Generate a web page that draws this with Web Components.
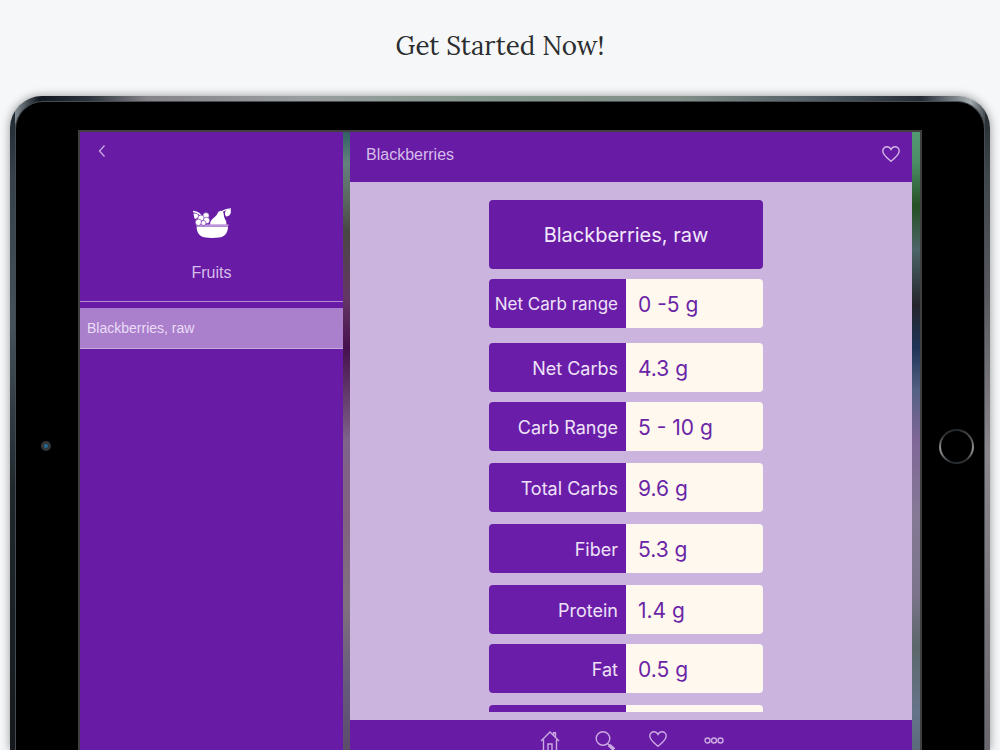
<!DOCTYPE html>
<html lang="en">
<head>
<meta charset="utf-8">
<title>Get Started Now!</title>
<style>
html, body { margin: 0; height: 100%; }
body { background: #f6f7f9; overflow: hidden; font-family: Inter, "Liberation Sans", sans-serif; }
</style>
</head>
<body>
<landing-page>
  <tablet-device>
    <food-sidebar slot="side" category="Fruits">Blackberries, raw</food-sidebar>
    <food-detail slot="main" heading="Blackberries">
      <nutrition-card name="Blackberries, raw"></nutrition-card>
      <tab-bar slot="tabs"></tab-bar>
    </food-detail>
  </tablet-device>
</landing-page>
<script>
function define(name, render) {
  customElements.define(name, class extends HTMLElement {
    connectedCallback() {
      if (this.shadowRoot) return;
      this.attachShadow({ mode: 'open' }).innerHTML = render(this);
    }
  });
}

const heart = '<path d="M9 15.300C6.200 12.800 .8 9 .8 5C.8 2.500 2.700 .8 4.900 .8C6.900 .8 8.200 2 9 3.500C9.800 2 11.100 .8 13.100 .8C15.300 .8 17.200 2.500 17.200 5C17.200 9 11.800 12.800 9 15.300Z"/>';

define('landing-page', () => `
<style>
:host { display: flex; flex-direction: column; height: 100vh; }
h1 { margin: 0; padding: 28px 0 32px; text-align: center; color: #2b2d2f;
  font: 400 26px/36px Lora, "Liberation Serif", serif; }
::slotted(*) { flex: 1; min-height: 0; }
</style>
<h1>Get Started Now!</h1>
<slot></slot>`);

define('tablet-device', () => `
<style>
:host { display: flex; box-sizing: border-box; margin: 0 10px; padding: 5px 5px 0; border-radius: 32px 32px 0 0;
  box-shadow: 0 0 10px rgba(0,0,0,.4);
  background:
    linear-gradient(#1c242b, #35404a 12%, #45525a 35%, #20282d 60%, #15191c) left / 5px 100% no-repeat,
    linear-gradient(#20282e, #3f464c 12%, #57585d 30%, #8a878d 54%, #6a686d) right / 5px 100% no-repeat,
    linear-gradient(90deg, #9aa5ab 0, #10161f 3%, #2c333b 8%, #858489 14%, #9a9ea0 30%, #82978a 50%, #838f89 68%, #555e65 82%, #252c36 93%, #a5adb0 98%, #222a31); }
.bezel { flex: 1; min-width: 0; box-sizing: border-box; background: #000; border: 1px solid #454b50; border-width: 1px 1px 0; border-radius: 28px 28px 0 0;
  display: grid; grid-template-columns: 62px minmax(0, 1fr) 62px; padding-top: 28px; }
.edge { display: flex; align-items: center; justify-content: center; padding-top: 12px; }
.camera { width: 4px; height: 4px; border: 3px solid #33373a; border-radius: 50%; background: #226a91; }
button { width: 35px; height: 35px; padding: 2px; border: 0; border-radius: 50%;
  background: conic-gradient(#20252a, #555 17%, #999 28%, #333 40%, #22282d 55%, #999 72%, #333 86%, #20252a); }
button::before { content: ""; display: block; height: 100%; border-radius: 50%; background: #000; }
.edge.home { padding-left: 6px; }
.edge.cam { padding-right: 2px; }
.screen { min-height: 0; border: 2px solid #3f3f40; border-bottom: 0; display: grid;
  grid-template-columns: minmax(0, 263fr) 7px minmax(0, 562fr) 8px; grid-template-rows: minmax(0, 1fr); }
.divider { background: linear-gradient(#306064, #64817e 5%, #5a675f 11%, #494743 16%, #643665 27%, #46114d 35%, #7e638a 50%, #80617f 62%, #80707f 76%, #65597b 90%, #5b4c6a); }
.rim { background: linear-gradient(#529873, #4c8d66 5%, #254f24 12%, #4c6568 19%, #24252c 28%, #1e3457 35%, #566184 42%, #806798 50%, #857995 62%, #7b748b 75%, #5c676a 83%, #66748a 94%, #5a6a7a); }
</style>
<div class="bezel">
  <div class="edge cam"><span class="camera"></span></div>
  <div class="screen">
    <slot name="side"></slot><div class="divider"></div><slot name="main"></slot><div class="rim"></div>
  </div>
  <div class="edge home"><button aria-label="Home button"></button></div>
</div>`);

define('food-sidebar', el => `
<style>
:host { display: flex; flex-direction: column; background: #681ca5; color: #d6beea; }
button { align-self: flex-start; margin: 10px 0 0 16px; padding: 2px; border: 0; background: none; display: flex; }
.fruit { align-self: center; margin-top: 47px; }
h2 { margin: 0; padding: 24px 0 18px; text-align: center; font: 400 16px/20px "Liberation Sans", sans-serif; border-bottom: 1px solid #b58bd8; }
a { display: block; margin-top: 6px; padding: 10px 7px; background: #aa80cd; color: #eadcf5; text-decoration: none;
  font: 400 14px/20px "Liberation Sans", sans-serif; border-bottom: 1px solid #c6a9df; }
</style>
<button aria-label="Back"><svg width="8" height="14" viewBox="0 0 8 14" fill="none" stroke="#c9a8e2" stroke-width="1.300"><path d="M6.500 1.500L1.500 7L6.500 12.500"/></svg></button>
<svg class="fruit" width="40" height="32" viewBox="0 0 40 32" fill="#fff">
  <path d="M4.600 19.500H36C36 25.500 33 29.500 28.500 30.300Q20 31.700 12 30.300C7.500 29.500 4.600 25.500 4.600 19.500Z"/>
  <path d="M4 18.200H36.500" stroke="#dcbff0" stroke-width="1.200" fill="none"/>
  <path d="M18.200 17.600C17.500 12 23 11.500 25.500 6.500C26.500 4.300 28.700 3 30.500 4.400C32.300 6 31.500 8.500 32.500 11C33.500 13.500 35 14.500 34.200 17.600Z"/>
  <path d="M29.500 5Q32 2.500 39 1.800M1 4.500Q6 5 9 8.500" fill="none" stroke="#fff" stroke-width="1.300"/>
  <path d="M34 3.300L38.800 2.500Q39.500 6 37.500 8.300Q35.500 9.500 34 9.500Q32 6.500 34 3.300ZM1.500 6.500Q6.500 6 6.500 9.500Q4.500 12.500 2.500 11.500Q2 9.500 1.500 6.500Z"/>
  <g stroke="#681ca5" stroke-width=".6"><circle cx="14" cy="8.800" r="3.200"/><circle cx="9" cy="11.200" r="3.200"/><circle cx="14.500" cy="13.500" r="3.300"/><circle cx="6.500" cy="15.300" r="3.200"/><circle cx="11.500" cy="16" r="2.500"/></g>
</svg>
<h2>${el.getAttribute('category')}</h2>
<a href="#blackberries"><slot></slot></a>`);

define('food-detail', el => `
<style>
:host { display: flex; flex-direction: column; min-height: 0; background: #cbb5df; }
header { display: flex; align-items: center; justify-content: space-between; box-sizing: border-box; height: 50px;
  padding: 0 12px 4px 16px; background: #681ca5; color: #d6beea; }
h2 { margin: 0; font: 400 16px/20px "Liberation Sans", sans-serif; }
button { border: 0; background: none; padding: 0 0 2px; display: flex; }
main { flex: 1; min-height: 0; overflow: hidden; display: flex; justify-content: center; align-items: flex-start;
  margin: 18px 10px 8px 0; }
</style>
<header><h2>${el.getAttribute('heading')}</h2>
<button aria-label="Add to favourites"><svg width="18" height="16" viewBox="0 0 18 16" fill="none" stroke="#d3b7e8" stroke-width="1.400">${heart}</svg></button></header>
<main><slot></slot></main>
<slot name="tabs"></slot>`);

const rows = [
  ['Net Carb range', '0 -5 g', 'tight long'],
  ['Net Carbs', '4.3 g', 'loose'],
  ['Carb Range', '5 - 10 g', 'tight'],
  ['Total Carbs', '9.6 g', ''],
  ['Fiber', '5.3 g', ''],
  ['Protein', '1.4 g', ''],
  ['Fat', '0.5 g', 'tight'],
  ['', '', '']
];

define('nutrition-card', el => `
<style>
:host { display: block; width: 274px; }
table, caption, tbody { display: block; }
caption { background: #681ca5; color: #f2e9fa; border-radius: 4px; text-align: center; padding: 21px 0 19px; font-size: 20px; line-height: 29px; }
tr { display: grid; grid-template-columns: repeat(2, minmax(0, 1fr)); margin-top: 12px; border-radius: 4px; overflow: hidden; line-height: 47px; }
tr.tight { margin-top: 10px; }
tr.loose { margin-top: 15px; }
th { min-height: 47px; padding: 2px 8px 0 0; background: #6a1da8; color: #eee2f8; font-size: 18px; font-weight: 400; text-align: right; white-space: nowrap; }
.long th { font-size: 17px; }
td { padding: 2px 0 0 12px; background: #fff8ee; color: #6a25a6; font-size: 21px; }
</style>
<table>
<caption>${el.getAttribute('name')}</caption>
<tbody>${rows.map(([k, v, c]) => `<tr class="${c}"><th scope="row">${k}</th><td>${v}</td></tr>`).join('')}</tbody>
</table>`);

define('tab-bar', () => `
<style>
:host { display: block; flex: none; height: 30px; overflow: hidden; background: #681ca5; }
nav { display: grid; grid-template-columns: 55px 55px 51px 61px; justify-content: center; padding: 11px 0 0 4px; }
a { display: flex; justify-content: center; height: 22px; }
svg { fill: none; stroke: #cbaae3; stroke-width: 1.400; }
</style>
<nav>
<a href="#home" aria-label="Home"><svg width="20" height="22" viewBox="0 0 20 22"><path d="M1 10L10 1L19 10M3.500 8.500V21H8V13H12V21H16.500V8.500M13.500 4V1.800H15.500V6"/></svg></a>
<a href="#search" aria-label="Search"><svg width="20" height="22" viewBox="0 0 20 22"><circle cx="8" cy="7.500" r="6.800"/><path d="M12.500 12.500L15 15"/><path d="M14 14L19 18.500" stroke-width="3.500"/></svg></a>
<a href="#favourites" aria-label="Favourites"><svg width="18" height="16" viewBox="0 0 18 16">${heart}</svg></a>
<a href="#more" aria-label="More"><svg width="20" height="20" viewBox="0 0 20 20"><circle cx="3.500" cy="9.500" r="2.500"/><circle cx="10" cy="9.500" r="2.500"/><circle cx="16.500" cy="9.500" r="2.500"/></svg></a>
</nav>`);
</script>
</body>
</html>
